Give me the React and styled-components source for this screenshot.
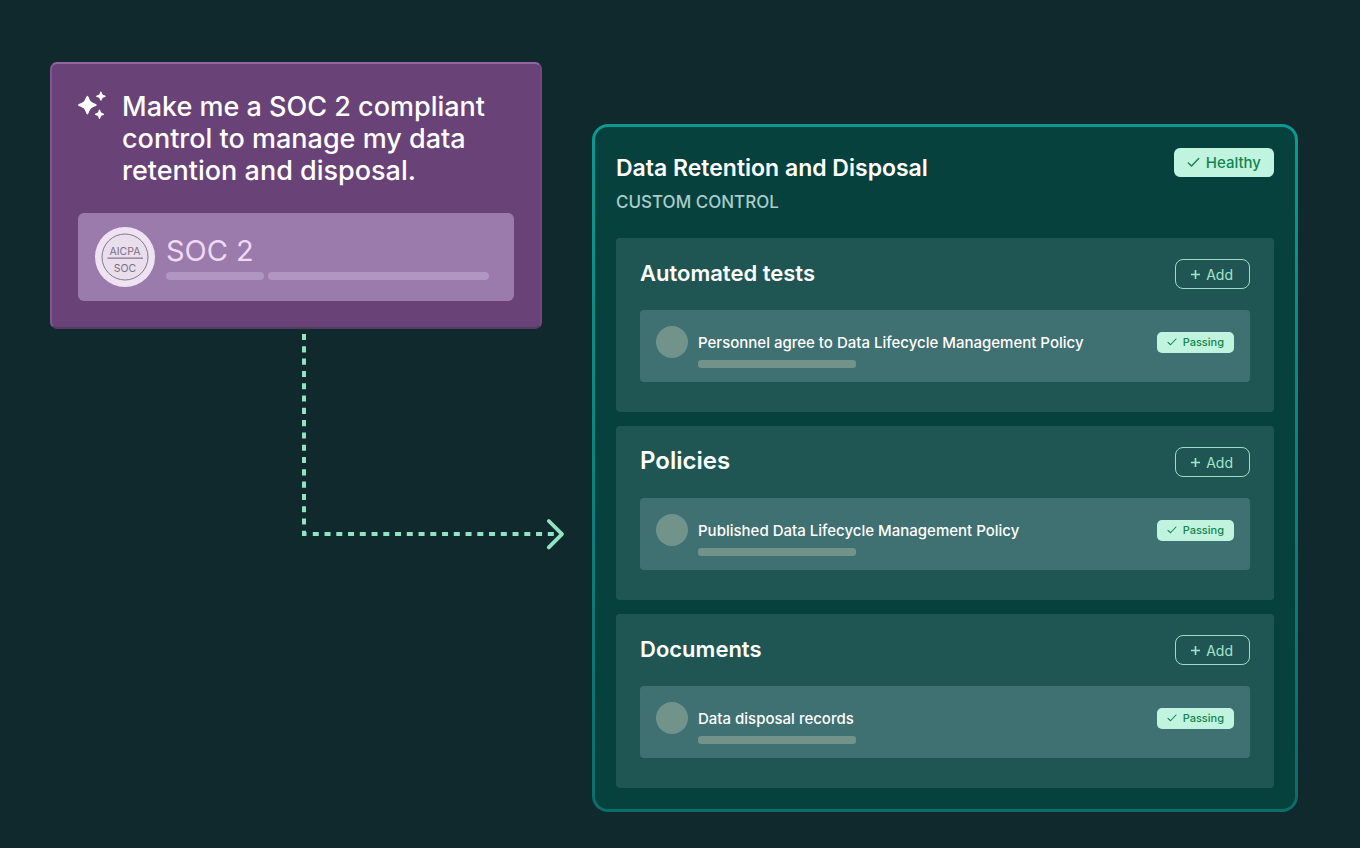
import React from "react";
import styled, { createGlobalStyle } from "styled-components";

const sections = [
  {
    id: "tests",
    title: "Automated tests",
    item: "Personnel agree to Data Lifecycle Management Policy",
  },
  {
    id: "policies",
    title: "Policies",
    large: true,
    item: "Published Data Lifecycle Management Policy",
  },
  {
    id: "documents",
    title: "Documents",
    item: "Data disposal records",
  },
];

function SparkleIcon() {
  return (
    <svg width="30" height="30" viewBox="0 0 30 30" fill="#ffffff">
      <path d="M9.4 4.8C10.6 4.8 11.4 8.9 13 10.5C14.6 12.1 18.8 12.8 18.8 14C18.8 15.2 14.6 15.9 13 17.5C11.4 19.1 10.6 23.4 9.4 23.4C8.2 23.4 7.4 19.1 5.8 17.5C4.2 15.9 0 15.2 0 14C0 12.8 4.2 12.1 5.8 10.5C7.4 8.9 8.2 4.8 9.4 4.8Z" />
      <path d="M22.9 0.6C23.7 0.6 23.9 2.8 24.6 3.5C25.3 4.2 27.8 4.4 27.8 5.2C27.8 6 25.3 6.2 24.6 6.9C23.9 7.6 23.7 9.8 22.9 9.8C22.1 9.8 21.9 7.6 21.2 6.9C20.5 6.2 18 6 18 5.2C18 4.4 20.5 4.2 21.2 3.5C21.9 2.8 22.1 0.6 22.9 0.6Z" />
      <path d="M21.5 18.6C22.3 18.6 22.5 20.9 23.2 21.6C23.9 22.3 26.2 22.5 26.2 23.3C26.2 24.1 23.9 24.3 23.2 25C22.5 25.7 22.3 28 21.5 28C20.7 28 20.5 25.7 19.8 25C19.1 24.3 16.8 24.1 16.8 23.3C16.8 22.5 19.1 22.3 19.8 21.6C20.5 20.9 20.7 18.6 21.5 18.6Z" />
    </svg>
  );
}

function SealIcon() {
  return (
    <svg width="60" height="60" viewBox="0 0 60 60">
      <circle cx="30" cy="30" r="30" fill="#efe2f3" />
      <circle cx="30" cy="30" r="23" fill="#e9deec" stroke="#85768c" strokeWidth="1" />
      <path d="M12.5 31.2H48" stroke="#85768c" strokeWidth="1.2" />
      <g fill="#7d6e85" fontFamily="Inter, sans-serif" fontSize="10.5" textAnchor="middle">
        <text x="30" y="28">AICPA</text>
        <text x="30" y="45">SOC</text>
      </g>
    </svg>
  );
}

function CheckIcon({ size }) {
  return (
    <svg width={size} height={size} viewBox="0 0 12 12" fill="none">
      <path
        d="M1.2 6.4L4.2 9.3L10.8 2.4"
        stroke="#12844f"
        strokeWidth="1.3"
        strokeLinecap="round"
        strokeLinejoin="round"
      />
    </svg>
  );
}

function PlusIcon() {
  return (
    <svg width="9" height="9" viewBox="0 0 9 9">
      <path d="M4.5 0V9M0 4.5H9" stroke="#a5e5cb" strokeWidth="1.6" />
    </svg>
  );
}

function ConnectorArrow() {
  return (
    <Connector viewBox="0 0 266 218" width="266" height="218" fill="none">
      <path d="M4 0V198" stroke="#92e3c2" strokeWidth="4" strokeDasharray="6.1 6.2" />
      <path d="M2 200H6.5" stroke="#92e3c2" strokeWidth="4" />
      <path d="M12.8 200H257" stroke="#92e3c2" strokeWidth="4" strokeDasharray="6 5.75" />
      <path
        d="M248.8 187L262 200.2L248.8 213.4"
        stroke="#92e3c2"
        strokeWidth="3.8"
        strokeLinecap="round"
        strokeLinejoin="round"
      />
    </Connector>
  );
}

function ControlSection({ title, large, item }) {
  return (
    <Section>
      <SectionHeader>
        <SectionTitle $large={large}>{title}</SectionTitle>
        <AddButton type="button">
          <PlusIcon />
          Add
        </AddButton>
      </SectionHeader>
      <ItemRow>
        <Avatar />
        <ItemBody>
          <ItemTitle>{item}</ItemTitle>
          <ItemBar />
        </ItemBody>
        <PassingBadge>
          <CheckIcon size={10} />
          Passing
        </PassingBadge>
      </ItemRow>
    </Section>
  );
}

function App() {
  return (
    <>
      <GlobalStyle />
      <Page>
        <PromptColumn>
          <PromptCard>
            <Prompt>
              <SparkleIcon />
              <PromptText>
                Make me a SOC 2 compliant control to manage my data retention and
                disposal.
              </PromptText>
            </Prompt>
            <Framework>
              <SealIcon />
              <FrameworkBody>
                <FrameworkName>SOC 2</FrameworkName>
                <FrameworkBars>
                  <FrameworkBar $grow={98} />
                  <FrameworkBar $grow={221} />
                </FrameworkBars>
              </FrameworkBody>
            </Framework>
          </PromptCard>
          <ConnectorArrow />
        </PromptColumn>
        <ControlCard>
          <ControlHeader>
            <div>
              <ControlTitle>Data Retention and Disposal</ControlTitle>
              <ControlKind>CUSTOM CONTROL</ControlKind>
            </div>
            <HealthyBadge>
              <CheckIcon size={13} />
              Healthy
            </HealthyBadge>
          </ControlHeader>
          <SectionList>
            {sections.map(({ id, title, large, item }) => (
              <ControlSection key={id} title={title} large={large} item={item} />
            ))}
          </SectionList>
        </ControlCard>
      </Page>
    </>
  );
}

export default App;

const GlobalStyle = createGlobalStyle`
  * {
    box-sizing: border-box;
  }

  body {
    margin: 0;
    background-color: #10292c;
    font-family: Inter, "Liberation Sans", sans-serif;
  }

  h1, h2, p {
    margin: 0;
  }

  svg {
    display: block;
    flex-shrink: 0;
  }
`;

const Page = styled.main`
  display: grid;
  grid-template-columns: minmax(340px, 492px) minmax(0, 1fr);
  align-items: start;
  gap: 50px;
  min-height: 100vh;
  padding: 62px 62px 36px 50px;
`;

const PromptColumn = styled.div`
  display: flex;
  flex-direction: column;
  gap: 5px;
`;

const PromptCard = styled.section`
  padding: 27px 26px 26px;
  border: 2px solid;
  border-color: #9467a2 #71497f #553a66 #80588f;
  border-radius: 7px;
  background-color: #694278;
`;

const Prompt = styled.div`
  display: flex;
  gap: 14px;
`;

const PromptText = styled.p`
  color: #ffffff;
  font-size: 27px;
  font-weight: 500;
  line-height: 32px;
`;

const Framework = styled.div`
  display: flex;
  align-items: center;
  gap: 11px;
  height: 88px;
  margin-top: 26px;
  padding: 0 25px 0 17px;
  border-radius: 6px;
  background-color: #9b7aac;
`;

const FrameworkBody = styled.div`
  flex: 1;
`;

const FrameworkName = styled.p`
  color: #efd9f7;
  font-size: 29px;
  line-height: 34px;
`;

const FrameworkBars = styled.div`
  display: flex;
  gap: 4px;
  margin-top: 4px;
`;

const FrameworkBar = styled.span`
  flex: ${(props) => props.$grow} 1 0;
  height: 8px;
  border-radius: 4px;
  background-color: #b195c2;
`;

const Connector = styled.svg`
  align-self: flex-start;
  margin-left: 250px;
`;

const ControlCard = styled.section`
  margin-top: 62px;
  padding: 21px;
  border: 3px solid transparent;
  border-radius: 16px;
  background:
    linear-gradient(#06413e, #06413e) padding-box,
    linear-gradient(#0b9a92, #0b6d69) border-box;
`;

const ControlHeader = styled.header`
  display: flex;
  justify-content: space-between;
  align-items: flex-start;
`;

const ControlTitle = styled.h1`
  padding-top: 4px;
  color: #ffffff;
  font-size: 23px;
  font-weight: 600;
  line-height: 32px;
`;

const ControlKind = styled.p`
  padding-top: 6px;
  color: #a9cdc9;
  font-size: 17px;
  font-weight: 500;
  line-height: 24px;
`;

const HealthyBadge = styled.span`
  display: flex;
  align-items: center;
  gap: 6px;
  height: 29px;
  padding: 0 13px;
  border-radius: 6px;
  background-color: #c0f4df;
  color: #12844f;
  font-size: 15px;
  font-weight: 500;
`;

const PassingBadge = styled(HealthyBadge)`
  align-self: center;
  height: 21px;
  margin-bottom: 8px;
  padding: 0 10px;
  border-radius: 5px;
  font-size: 11px;
`;

const SectionList = styled.div`
  display: flex;
  flex-direction: column;
  gap: 14px;
  margin-top: 24px;
`;

const Section = styled.section`
  padding: 21px 24px 30px;
  border-radius: 4px;
  background-color: #1f5653;
`;

const SectionHeader = styled.div`
  display: flex;
  justify-content: space-between;
  align-items: flex-start;
`;

const SectionTitle = styled.h2`
  color: #ffffff;
  font-size: ${(props) => (props.$large ? "24px" : "22px")};
  font-weight: 600;
  line-height: 28px;
`;

const AddButton = styled.button`
  display: flex;
  align-items: center;
  gap: 6px;
  height: 30px;
  padding: 0 16px 0 15px;
  border: 1px solid #98e0c3;
  border-radius: 8px;
  background: transparent;
  color: #a5e5cb;
  font-family: inherit;
  font-size: 14px;
  cursor: pointer;
`;

const ItemRow = styled.div`
  display: flex;
  align-items: flex-start;
  gap: 10px;
  margin-top: 21px;
  padding: 16px;
  height: 72px;
  border-radius: 4px;
  background-color: #3f7072;
`;

const Avatar = styled.span`
  width: 32px;
  height: 32px;
  border-radius: 50%;
  background-color: #71938a;
`;

const ItemBody = styled.div`
  flex: 1;
  padding-top: 6px;
`;

const ItemTitle = styled.p`
  color: #ffffff;
  font-size: 15px;
  font-weight: 500;
  line-height: 22px;
`;

const ItemBar = styled.div`
  width: 158px;
  height: 8px;
  margin-top: 6px;
  border-radius: 3px;
  background-color: #71938a;
`;
